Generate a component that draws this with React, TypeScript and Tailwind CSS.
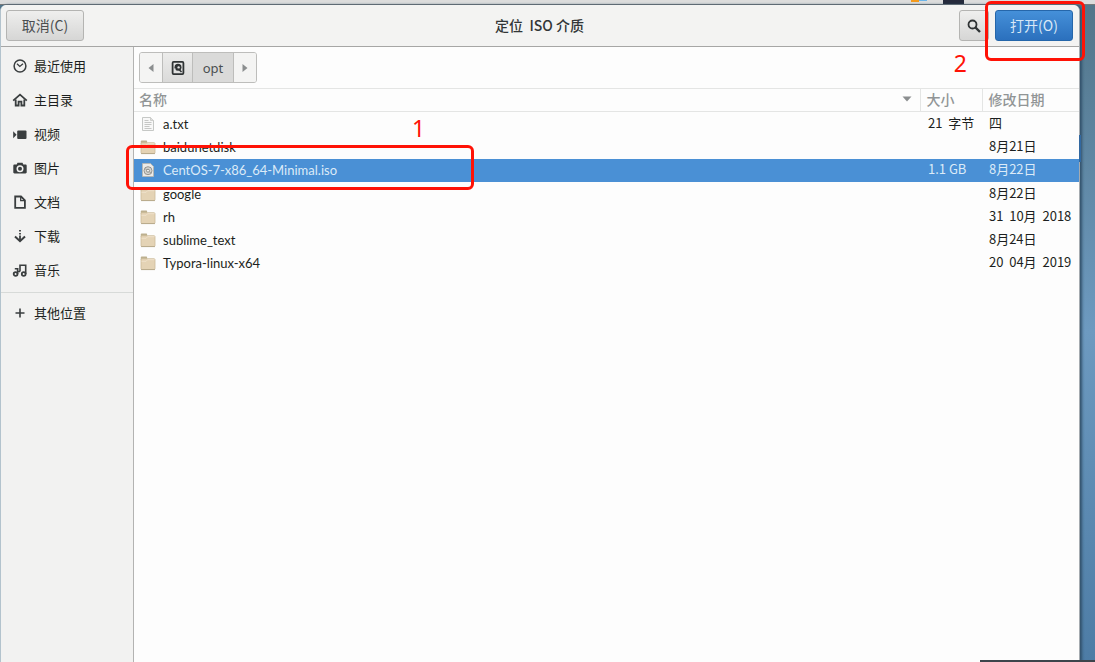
import type { ReactNode } from "react";

const glyph = "h-4 w-4 shrink-0";

function Stroke({ children }: { children: ReactNode }) {
  return (
    <svg viewBox="0 0 16 16" className={glyph} fill="none" stroke="#3a3e3f" strokeWidth="1.8" aria-hidden="true">
      {children}
    </svg>
  );
}

const places: { label: string; icon: ReactNode }[] = [
  {
    label: "最近使用",
    icon: (
      <Stroke>
        <circle cx="8" cy="8" r="5.9" strokeWidth="1.5" />
        <path d="M5 5.8l2.8 2.7L11 5.8" strokeWidth="1.3" />
      </Stroke>
    ),
  },
  {
    label: "主目录",
    icon: (
      <Stroke>
        <path d="M1.2 8.6L8 2.6l6.8 6" />
        <path d="M3.7 7.5v6h2.9V9.6h2.8v3.9h2.9v-6" />
      </Stroke>
    ),
  },
  {
    label: "视频",
    icon: (
      <svg viewBox="0 0 16 16" className={glyph} fill="#3a3e3f" aria-hidden="true">
        <rect x="5.2" y="4.5" width="9.3" height="8.5" rx="1" />
        <path d="M1.2 5.3L4.6 8.7 1.2 12.3z" />
      </svg>
    ),
  },
  {
    label: "图片",
    icon: (
      <svg viewBox="0 0 16 16" className={glyph} fill="#3a3e3f" fillRule="evenodd" aria-hidden="true">
        <path d="M5.5 2.8h5l.8 1.7h2.2c.7 0 1.2.5 1.2 1.2v6.6c0 .7-.5 1.2-1.2 1.2h-11c-.7 0-1.2-.5-1.2-1.2V5.7c0-.7.5-1.2 1.2-1.2h2.2zM8 5.2a3.5 3.5 0 100 7 3.5 3.5 0 000-7z" />
        <circle cx="8" cy="8.7" r="2" />
      </svg>
    ),
  },
  {
    label: "文档",
    icon: (
      <Stroke>
        <path d="M3.2 2.5h5.8l3.9 3.9v7.5H3.2z" />
        <path d="M8.7 2.5v4.2h4.2" strokeWidth="1.3" />
      </Stroke>
    ),
  },
  {
    label: "下载",
    icon: (
      <Stroke>
        <path d="M8 2v1.5M8 5v1.5M8 7.5v5" />
        <path d="M3 8.5l5 4.7 5-4.7" strokeWidth="2" />
      </Stroke>
    ),
  },
  {
    label: "音乐",
    icon: (
      <Stroke>
        <circle cx="3.6" cy="12" r="1.9" />
        <circle cx="11.7" cy="12" r="1.9" />
        <path d="M2.8 6.8H6.5M5.6 12V6M8 9.5V3.2h5.7V12M8 9.5H6" strokeWidth="1.6" />
      </Stroke>
    ),
  },
];

function FolderIcon() {
  return (
    <svg viewBox="0 0 16 16" className={glyph} aria-hidden="true">
      <path d="M.8 5V2.5c0-.6.3-1 .9-1h4.5c.6 0 .9.5.9 1V5z" fill="#bdb08f" />
      <rect x="1" y="3.7" width="14" height="10.8" rx="1" fill="#e4d3b5" stroke="#cbbb9b" strokeWidth=".8" />
      <path d="M1.5 6.3h4.6l1.5-1.6h6.9" stroke="#f1e5cf" strokeWidth=".8" fill="none" />
      <path d="M1 14.6h14" stroke="#b0a183" strokeWidth=".8" />
    </svg>
  );
}

function TextIcon() {
  return (
    <svg viewBox="0 0 16 16" className={glyph} aria-hidden="true">
      <path d="M2.5 1.5h8l3 3v10h-11z" fill="#f8f8f8" stroke="#c0c2bf" strokeWidth=".9" />
      <path d="M10.5 1.5v3h3" fill="#ddd" stroke="#c6c8c5" strokeWidth=".8" />
      <path d="M4.5 4.5h4M4.5 6.5h7M4.5 8.5h7M4.5 10.5h5M4.5 12.5h7" stroke="#bfc1be" strokeWidth=".9" />
    </svg>
  );
}

function DiscImageIcon() {
  return (
    <svg viewBox="0 0 16 16" className={glyph} aria-hidden="true">
      <path d="M2.5 1.5h8l3 3v10h-11z" fill="#ecebe8" stroke="#b5b6b2" strokeWidth=".9" />
      <circle cx="8" cy="8.7" r="4" fill="#d6d5d1" stroke="#8e8d88" strokeWidth=".9" />
      <circle cx="8" cy="8.7" r="1.5" fill="#f5f5f3" stroke="#85847f" strokeWidth=".9" />
      <path d="M5 6.7l2 1M9 9.7l2.5 1.3" stroke="#9b9a96" strokeWidth=".8" />
    </svg>
  );
}

type Entry = { name: string; kind: "text" | "folder" | "disc"; size: string; date: string; selected?: boolean };

const entries: Entry[] = [
  { name: "a.txt", kind: "text", size: "21  字节", date: "四" },
  { name: "baidunetdisk", kind: "folder", size: "", date: "8月21日" },
  { name: "CentOS-7-x86_64-Minimal.iso", kind: "disc", size: "1.1 GB", date: "8月22日", selected: true },
  { name: "google", kind: "folder", size: "", date: "8月22日" },
  { name: "rh", kind: "folder", size: "", date: "31  10月  2018" },
  { name: "sublime_text", kind: "folder", size: "", date: "8月24日" },
  { name: "Typora-linux-x64", kind: "folder", size: "", date: "20  04月  2019" },
];

const icons = { text: <TextIcon />, folder: <FolderIcon />, disc: <DiscImageIcon /> };

const greyButton = "border border-[#b4b4b2] bg-linear-to-b from-[#efefee] to-[#d6d6d5] text-[#4b4f50]";

export default function App() {
  return (
    <div className="relative flex min-h-screen flex-col overflow-hidden bg-linear-to-b from-[#527589] via-[#6d9ac0] to-[#4d7ca5] font-['Noto_Sans_CJK_SC',sans-serif] text-[13px] leading-5 text-[#1c1f20]">
      <div className="flex h-[5px] shrink-0 justify-end border-b border-[#77797a] bg-[#dcdcdc] pr-[131px]">
        <div className="h-0.5 w-2 bg-[#f39a1e]" />
        <div className="mr-4 h-px w-2 bg-[#6bb5ea]" />
        <div className="h-1 w-[21px] bg-[#252a3c]" />
      </div>

      <div className="mr-[15px] flex grow flex-col rounded-t-md border-x border-l-[#b3c3cd] border-r-[#a5abb0] bg-[#fdfdfd] shadow-[2px_0_3px_#31506a]">
        <header className="grid h-[42px] shrink-0 grid-cols-[1fr_auto_1fr] items-center rounded-t-md border-b border-[#a6a6a5] bg-[#f3f3f2] pr-1.5 pl-[5px]">
          <button type="button" className={`h-[31px] w-[78px] justify-self-start rounded-[3px] pb-0.5 text-sm ${greyButton}`}>
            取消(C)
          </button>
          <h1 className="whitespace-pre pb-0.5 text-sm font-medium text-[#323637]">定位  ISO 介质</h1>
          <div className="flex justify-self-end gap-1.5">
            <button type="button" aria-label="搜索" className={`flex h-[31px] w-[30px] items-center justify-center rounded-[3px] ${greyButton}`}>
              <svg viewBox="0 0 16 16" className="h-4 w-4" fill="none" stroke="#2f3334" aria-hidden="true">
                <circle cx="6.5" cy="6.5" r="4" strokeWidth="1.8" />
                <path d="M9.5 9.5l4.5 4.5" strokeWidth="2.4" />
              </svg>
            </button>
            <button type="button" className="h-[31px] w-[78px] rounded-[3px] border border-[#2566aa] bg-linear-to-b from-[#4590d9] to-[#2b70bd] pb-0.5 text-sm text-[#d9e8f6]">
              打开(O)
            </button>
          </div>
        </header>

        <div className="flex grow">
          <nav className="w-[133px] shrink-0 border-r border-[#b3b3b2] bg-[#f2f2f1] pt-0.5">
            {places.map((place) => (
              <a key={place.label} href="#" className="flex h-[34px] items-center gap-1.5 pl-[11px]">
                {place.icon}
                {place.label}
              </a>
            ))}
            <div className="mt-[5px] border-t border-[#d7dad8] pt-[3px]">
              <a href="#" className="flex h-[34px] items-center gap-1.5 pl-[11px]">
                <Stroke>
                  <path d="M8 3.5v9M3.5 8h9" strokeWidth="1.6" />
                </Stroke>
                其他位置
              </a>
            </div>
          </nav>

          <main className="min-w-0 grow">
            <div className="flex h-[41px] items-center px-[5px]">
              <div className="flex h-[31px] overflow-hidden rounded-[3px] border border-[#bdbdbb]">
                <button type="button" aria-label="后退" className="flex w-[22px] items-center justify-center bg-[#f4f4f3]">
                  <svg viewBox="0 0 6 8" className="h-2 w-1.5" fill="#8b8e8f" aria-hidden="true"><path d="M5.5 0v8L.5 4z" /></svg>
                </button>
                <button type="button" aria-label="文件系统" className="flex w-[30px] items-center justify-center border-l border-[#bdbdbb] bg-linear-to-b from-[#ececeb] to-[#dadad9]">
                  <svg viewBox="0 0 16 16" className="h-4 w-4" aria-hidden="true">
                    <rect x="2.6" y="1.9" width="10.8" height="12.2" rx="1" fill="none" stroke="#2f3334" strokeWidth="1.8" />
                    <circle cx="8" cy="7.2" r="3.5" fill="#2f3334" />
                    <circle cx="8.6" cy="7.4" r="1.2" fill="#e5e5e4" />
                    <path d="M5 11.5V8.5" stroke="#e5e5e4" strokeWidth="1.2" />
                    <path d="M8.5 9l3 3" stroke="#2f3334" strokeWidth="1.6" />
                  </svg>
                </button>
                <button type="button" className="w-[42px] border-x border-[#bdbdbb] bg-[#dadad9] font-['Noto_Sans',sans-serif] text-[#4b4f50]">opt</button>
                <button type="button" aria-label="前进" className="flex w-[22px] items-center justify-center bg-[#f4f4f3]">
                  <svg viewBox="0 0 6 8" className="h-2 w-1.5" fill="#8b8e8f" aria-hidden="true"><path d="M.5 0v8l5-4z" /></svg>
                </button>
              </div>
            </div>

            <table className="h-[187px] w-full table-fixed border-collapse text-left">
              <colgroup>
                <col />
                <col className="w-[62px]" />
                <col className="w-[96px]" />
              </colgroup>
              <thead>
                <tr className="border-y border-[#e4e5e4] text-sm text-[#919596]">
                  <th className="p-0 pr-2 pb-0.5 pl-[5px] font-medium leading-5">
                    <div className="flex items-center justify-between">
                      名称
                      <svg viewBox="0 0 10 6" className="h-1.5 w-2.5" fill="#8b8e8f" aria-hidden="true"><path d="M.5.5h9L5 5.5z" /></svg>
                    </div>
                  </th>
                  <th className="border-l border-[#e4e5e4] p-0 pb-0.5 pl-[5px] font-medium leading-5">大小</th>
                  <th className="border-l border-[#e4e5e4] p-0 pb-0.5 pl-[5px] font-medium leading-5">修改日期</th>
                </tr>
              </thead>
              <tbody>
                {entries.map((entry) => (
                  <tr key={entry.name} className={entry.selected ? "bg-[#4a90d5] text-[#dcebf8]" : ""}>
                    <td className="p-0 pl-1.5 font-['Lato',sans-serif] leading-[22px]">
                      <div className="flex items-center gap-[7px]">
                        {icons[entry.kind]}
                        {entry.name}
                      </div>
                    </td>
                    <td className="whitespace-pre p-0 pb-0.5 pl-[7px] leading-5">{entry.size}</td>
                    <td className="whitespace-pre p-0 pb-0.5 pl-1.5 leading-5">{entry.date}</td>
                  </tr>
                ))}
              </tbody>
            </table>
          </main>
        </div>
      </div>

      <div className="absolute right-0 bottom-0 h-0.5 w-[115px] bg-[#3c444b]" />
      <div className="absolute top-[135px] right-3.5 h-[27px] w-0.5 bg-[#3268a0]" />

      <div className="pointer-events-none absolute top-[145px] left-[126px] h-[45px] w-[348px] rounded-md border-3 border-[#ff1206]" />
      <span className="absolute top-[114px] left-[412px] font-['Noto_Sans',sans-serif] text-[23px] leading-7 text-[#ff1206]">1</span>
      <div className="pointer-events-none absolute top-px right-2.5 h-[60px] w-[100px] rounded-md border-3 border-[#ff1206]" />
      <span className="absolute top-[49px] right-[128px] font-['Noto_Sans',sans-serif] text-[23px] leading-7 text-[#ff1206]">2</span>
    </div>
  );
}
